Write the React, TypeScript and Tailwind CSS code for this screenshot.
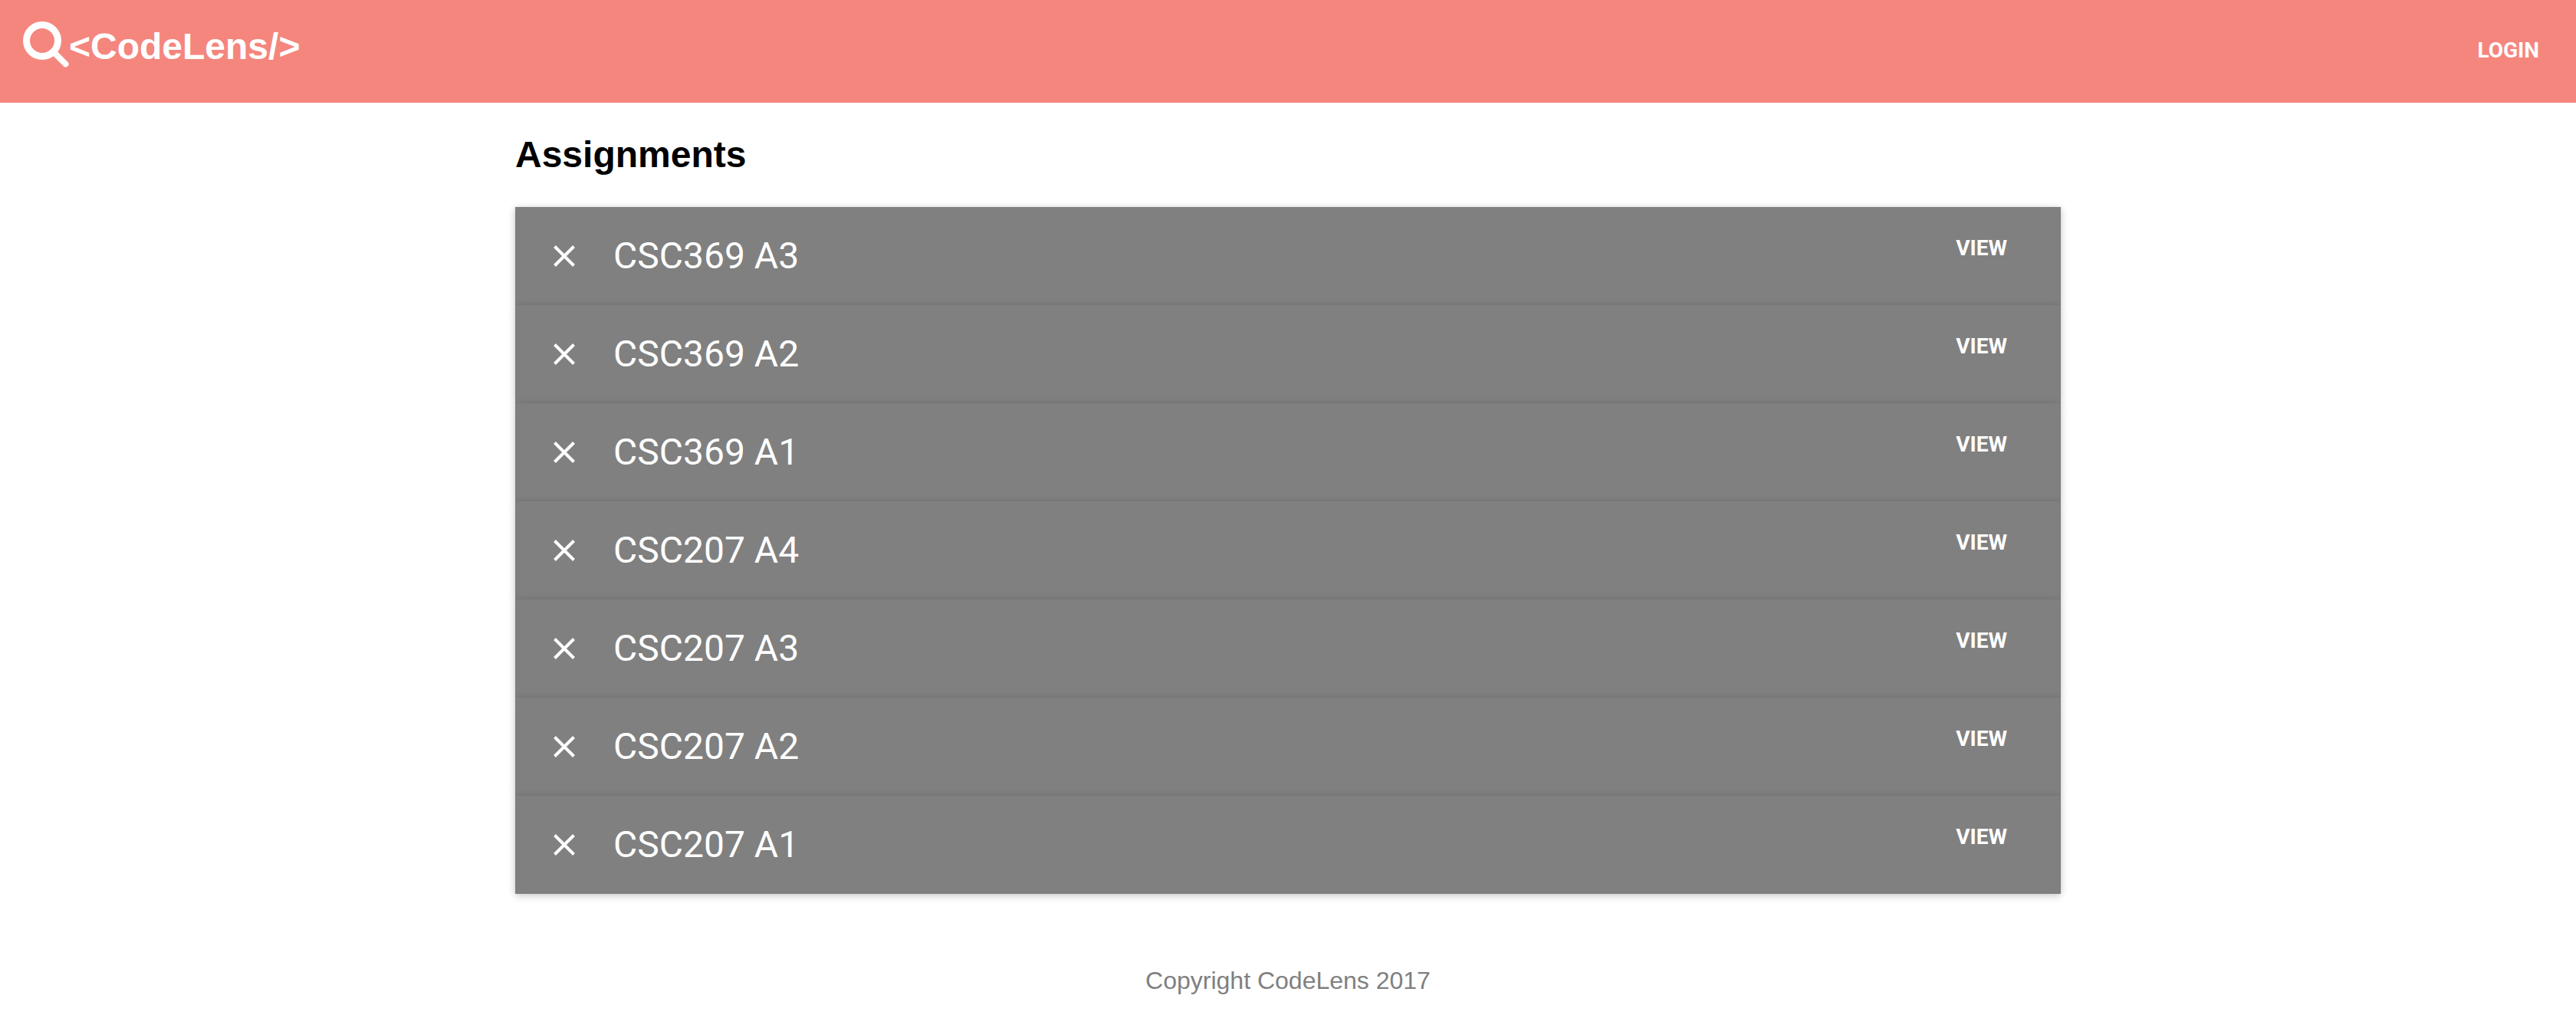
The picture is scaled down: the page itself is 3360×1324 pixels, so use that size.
const assignments = [
  "CSC369 A3",
  "CSC369 A2",
  "CSC369 A1",
  "CSC207 A4",
  "CSC207 A3",
  "CSC207 A2",
  "CSC207 A1",
];

function SearchIcon() {
  return (
    <svg
      className="h-16 w-[62px] shrink-0"
      viewBox="0 0 62 64"
      fill="none"
      stroke="currentColor"
      aria-hidden="true"
    >
      <circle cx="27" cy="29" r="20.5" strokeWidth="9" />
      <path d="M43 45 57.5 59.5" strokeWidth="8" strokeLinecap="round" />
    </svg>
  );
}

function CloseIcon() {
  return (
    <svg
      className="size-12"
      viewBox="0 0 48 48"
      fill="none"
      stroke="currentColor"
      strokeWidth="4"
      aria-hidden="true"
    >
      <path d="M11.5 11.5 36.5 36.5M36.5 11.5 11.5 36.5" />
    </svg>
  );
}

function AssignmentRow({ name }: { name: string }) {
  return (
    <li className="flex h-32 items-center gap-10 bg-[#808080] px-10 text-white shadow-[0_2px_12px_rgba(0,0,0,0.12),0_2px_8px_rgba(0,0,0,0.12)]">
      <button type="button" aria-label={`Remove ${name}`}>
        <CloseIcon />
      </button>
      <span className="flex-1 text-5xl">{name}</span>
      <a
        href="#"
        aria-label={`View ${name}`}
        className="mb-5 px-[30px] text-[28px] leading-10 font-bold"
      >
        VIEW
      </a>
    </li>
  );
}

export default function App() {
  return (
    <div className="min-h-screen bg-white font-['Roboto',sans-serif]">
      <header className="flex items-start justify-between bg-[#f4867e] pr-12 pl-7 text-white">
        <a
          href="#"
          className="flex items-start pt-6 pb-9 font-['Liberation_Sans',sans-serif] text-5xl leading-[74px] font-bold"
        >
          <SearchIcon />
          <span>&lt;CodeLens/&gt;</span>
        </a>
        <a href="#" className="pt-[46px] text-[28px] leading-10 font-bold">
          LOGIN
        </a>
      </header>
      <main className="mx-auto w-3/5">
        <h1 className="py-9 font-['Liberation_Sans',sans-serif] text-5xl leading-16 font-bold text-black">
          Assignments
        </h1>
        <ul>
          {assignments.map((name) => (
            <AssignmentRow key={name} name={name} />
          ))}
        </ul>
      </main>
      <footer className="pt-23 pb-6 text-center font-['Liberation_Sans',sans-serif] text-[32px] leading-[42px] text-[#808080]">
        Copyright CodeLens 2017
      </footer>
    </div>
  );
}
